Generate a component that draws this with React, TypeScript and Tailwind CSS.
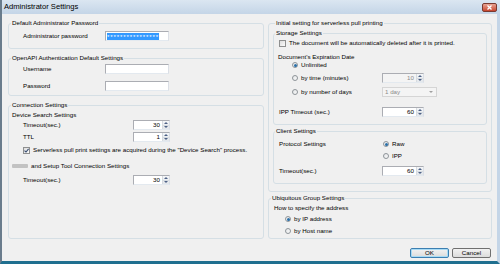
import type { ReactNode } from "react";

function Group({ title, className = "", children }: { title: string; className?: string; children?: ReactNode }) {
  return (
    <fieldset className={`border border-[#d5dfe5] rounded-[3px] ${className}`}>
      <legend className="ml-[2px] px-px h-[8px] leading-[8px]">{title}</legend>
      {children}
    </fieldset>
  );
}

function InnerGroup({ title, className = "", children }: { title: string; className?: string; children?: ReactNode }) {
  return (
    <fieldset className={`border border-[#d5dfe5] rounded-[3px] ${className}`}>
      <legend className="ml-px px-px h-[8px] leading-[8px]">{title}</legend>
      {children}
    </fieldset>
  );
}

function SpinArrows() {
  return (
    <div className="w-[7px] flex flex-col border-l border-[#d6dbe0] bg-gradient-to-b from-[#f4f6f8] to-[#e2e6ea]">
      <div className="flex-1 flex items-center justify-center border-b border-[#d6dbe0]">
        <svg width="4" height="2" viewBox="0 0 4 2"><path d="M0 2 L2 0 L4 2 Z" fill="#4d6185" /></svg>
      </div>
      <div className="flex-1 flex items-center justify-center">
        <svg width="4" height="2" viewBox="0 0 4 2"><path d="M0 0 L2 2 L4 0 Z" fill="#4d6185" /></svg>
      </div>
    </div>
  );
}

function Spin({ value, wide, disabled }: { value: string; wide?: boolean; disabled?: boolean }) {
  return (
    <div
      className={`flex h-[10px] ${wide ? "w-[42px]" : "w-[37px]"} border border-[#abadb3] border-b-[#e3e9ef] border-r-[#dbdfe6] ${
        disabled ? "bg-[#f4f4f4] text-[#8a8a8a]" : "bg-white"
      }`}
    >
      <span className="flex-1 text-right pr-[2px] leading-[8px]">{value}</span>
      <SpinArrows />
    </div>
  );
}

function TextBox({ children }: { children?: ReactNode }) {
  return (
    <div className="h-[10px] w-[64px] bg-white border border-[#abadb3] border-b-[#e3e9ef] border-r-[#dbdfe6] flex items-center pl-px">
      {children}
    </div>
  );
}

function Radio({ checked }: { checked?: boolean }) {
  return (
    <span className="w-[6px] h-[6px] rounded-full border border-[#8e9499] bg-gradient-to-br from-[#e4e6e8] to-[#fafafa] flex items-center justify-center shrink-0">
      {checked && <span className="w-[3px] h-[3px] rounded-full bg-[#2a6fa8]" />}
    </span>
  );
}

function Check({ checked }: { checked?: boolean }) {
  return (
    <span className="w-[7px] h-[7px] border border-[#8e8f8f] bg-gradient-to-br from-[#dcdcdc] to-[#fbfbfb] flex items-center justify-center shrink-0">
      {checked && (
        <svg width="5" height="5" viewBox="0 0 5 5">
          <path d="M0.5 2.6 L2 4 L4.6 0.8" stroke="#364c70" strokeWidth="1.1" fill="none" />
        </svg>
      )}
    </span>
  );
}

function Button({ label, primary }: { label: string; primary?: boolean }) {
  return (
    <div
      className={`w-[39px] h-[10px] rounded-[2px] flex items-center justify-center bg-gradient-to-b from-[#f2f2f2] to-[#dcdcdc] border ${
        primary ? "border-[#3c7fb1] shadow-[inset_0_0_0_1px_#a8dbf5]" : "border-[#707070]"
      }`}
    >
      {label}
    </div>
  );
}

export default function App() {
  return (
    <div className="w-[500px] h-[264px] flex flex-col font-['Liberation_Sans',Arial,sans-serif] text-[6.2px] text-black overflow-hidden">
      <div className="h-[14px] flex items-center justify-between bg-gradient-to-b from-[#dbe6f1] to-[#c4d5e7] border-l-2 border-[#6a7c8c] pl-[2px] pr-[3px]">
        <span className="text-[7.6px] leading-[8px]">Administrator Settings</span>
        <div className="w-[15px] h-[9px] rounded-[2px] border border-[#7a3a30] bg-gradient-to-b from-[#e8a393] to-[#c7432c] flex items-center justify-center">
          <svg width="5" height="5" viewBox="0 0 5 5">
            <path d="M0.5 0.5 L4.5 4.5 M4.5 0.5 L0.5 4.5" stroke="#fff" strokeWidth="1.3" />
          </svg>
        </div>
      </div>
      <div className="flex-1 flex flex-col bg-[#f0f0f0] border-l-2 border-l-[#6a7c8c] border-r-[3px] border-r-[#c4d5e7] border-b-[3px] border-b-[#1f6f8f] pt-[5px] pl-[6px]">
        <div className="flex gap-[4px]">
          <div className="w-[256px] flex flex-col">
            <Group title="Default Administrator Password" className="pb-[7px]">
              <div className="mt-[4px] h-[10px] flex items-center pl-[14px]">
                <span className="w-[82px]">Administrator password</span>
                <TextBox>
                  <span className="bg-[#3399ff] text-white leading-[7px] h-[7px] w-[52px] overflow-hidden tracking-[0.85px]">
                    ****************
                  </span>
                </TextBox>
              </div>
            </Group>
            <Group title="OpenAPI Authentication Default Settings" className="mt-[5px] pb-[4px]">
              <div className="mt-[2px] h-[10px] flex items-center pl-[14px]">
                <span className="w-[82px]">Username</span>
                <TextBox />
              </div>
              <div className="mt-[7px] h-[10px] flex items-center pl-[14px]">
                <span className="w-[82px]">Password</span>
                <TextBox />
              </div>
            </Group>
            <Group title="Connection Settings" className="mt-[5px] pb-[53px]">
              <div className="mt-[2px] h-[8px] flex items-center pl-[3px]">Device Search Settings</div>
              <div className="mt-[1px] h-[10px] flex items-center pl-[14px]">
                <span className="w-[110px]">Timeout(sec.)</span>
                <Spin value="30" />
              </div>
              <div className="mt-[2px] h-[10px] flex items-center pl-[14px]">
                <span className="w-[110px]">TTL</span>
                <Spin value="1" />
              </div>
              <div className="mt-[4px] h-[8px] flex items-center gap-[3px] pl-[14px]">
                <Check checked />
                <span>Serverless pull print settings are acquired during the "Device Search" process.</span>
              </div>
              <div className="mt-[8px] h-[8px] flex items-center gap-[3px] pl-[3px]">
                <span className="w-[16px] h-[4px] rounded-[1px] bg-[#c2c2c2] blur-[0.4px]" />
                <span>and Setup Tool Connection Settings</span>
              </div>
              <div className="mt-[5px] h-[10px] flex items-center pl-[14px]">
                <span className="w-[110px]">Timeout(sec.)</span>
                <Spin value="30" />
              </div>
            </Group>
          </div>

          <div className="w-[224px] flex flex-col">
            <Group title="Initial setting for serverless pull printing" className="px-[4px] pb-[7px]">
              <InnerGroup title="Storage Settings" className="mt-[2px] pb-[7px]">
                <div className="mt-[2px] h-[8px] flex items-center gap-[3px] pl-[5px]">
                  <Check />
                  <span>The document will be automatically deleted after it is printed.</span>
                </div>
                <div className="mt-[6px] h-[8px] flex items-center pl-[4px]">Document's Expiration Date</div>
                <div className="h-[8px] flex items-center gap-[3px] pl-[18px]">
                  <Radio checked />
                  <span>Unlimited</span>
                </div>
                <div className="mt-[4px] h-[10px] flex items-center pl-[18px]">
                  <span className="w-[90px] flex items-center gap-[3px]">
                    <Radio />
                    <span>by time (minutes)</span>
                  </span>
                  <Spin value="10" wide disabled />
                </div>
                <div className="mt-[4px] h-[10px] flex items-center pl-[18px]">
                  <span className="w-[90px] flex items-center gap-[3px]">
                    <Radio />
                    <span>by number of days</span>
                  </span>
                  <div className="w-[55px] h-[10px] border border-[#d5d5d5] bg-[#f4f4f4] text-[#8a8a8a] flex items-center justify-between pl-[2px] pr-[3px]">
                    <span className="leading-[8px]">1 day</span>
                    <svg width="4" height="2" viewBox="0 0 4 2"><path d="M0 0 L2 2 L4 0 Z" fill="#a0a0a0" /></svg>
                  </div>
                </div>
                <div className="mt-[10px] h-[10px] flex items-center pl-[5px]">
                  <span className="w-[103px]">IPP Timeout (sec.)</span>
                  <Spin value="60" wide />
                </div>
              </InnerGroup>
              <InnerGroup title="Client Settings" className="mt-[2px] pb-[7px]">
                <div className="mt-[5px] h-[8px] flex items-center pl-[5px]">
                  <span className="w-[104px]">Protocol Settings</span>
                  <span className="flex items-center gap-[3px]">
                    <Radio checked />
                    <span>Raw</span>
                  </span>
                </div>
                <div className="mt-[4px] h-[8px] flex items-center pl-[109px] gap-[3px]">
                  <Radio />
                  <span>IPP</span>
                </div>
                <div className="mt-[6px] h-[10px] flex items-center pl-[5px]">
                  <span className="w-[103px]">Timeout(sec.)</span>
                  <Spin value="60" wide />
                </div>
              </InnerGroup>
            </Group>
            <Group title="Ubiquitous Group Settings" className="mt-[2px] pb-[3px]">
              <div className="mt-[2px] h-[8px] flex items-center pl-[5px]">How to specify the address</div>
              <div className="mt-[3px] h-[8px] flex items-center gap-[3px] pl-[16px]">
                <Radio checked />
                <span>by IP address</span>
              </div>
              <div className="mt-[4px] h-[8px] flex items-center gap-[3px] pl-[16px]">
                <Radio />
                <span>by Host name</span>
              </div>
            </Group>
          </div>
        </div>
        <div className="mt-[9px] flex justify-end gap-[3px] pr-[6px]">
          <Button label="OK" primary />
          <Button label="Cancel" />
        </div>
      </div>
    </div>
  );
}
